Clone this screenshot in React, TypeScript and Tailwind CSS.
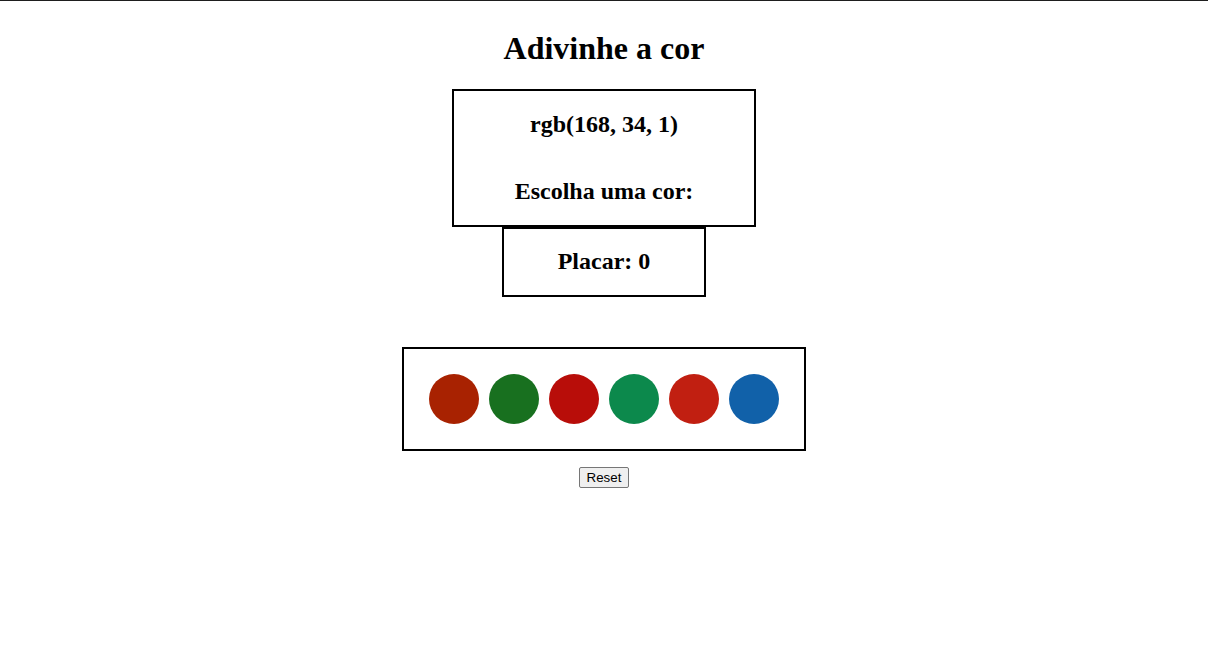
import { useState } from "react";

const initialColors = [
  "rgb(168, 34, 1)",
  "rgb(24, 112, 31)",
  "rgb(184, 13, 9)",
  "rgb(12, 137, 76)",
  "rgb(193, 31, 17)",
  "rgb(17, 97, 169)",
];

export default function App() {
  const [colors] = useState(initialColors);
  const [score, setScore] = useState(0);
  const target = colors[0];

  return (
    <div className="min-h-screen bg-white border-t border-[#1e1e1e] font-['Liberation_Serif',serif] text-black">
      <div className="flex flex-col items-center">
        <h1 className="mt-[29px] text-[32px] leading-[37px] font-bold">
          Adivinhe a cor
        </h1>

        <div className="mt-[22px] w-[304px] border-2 border-black flex flex-col items-center pt-[19px] pb-[20px] gap-[39px]">
          <h2 className="text-[24px] leading-[28px] font-bold">{target}</h2>
          <h2 className="text-[24px] leading-[28px] font-bold">
            Escolha uma cor:
          </h2>
        </div>

        <div className="w-[204px] border-2 border-black flex justify-center pt-[18px] pb-[20px]">
          <h2 className="text-[24px] leading-[28px] font-bold">
            Placar: {score}
          </h2>
        </div>

        <div className="mt-[50px] w-[404px] border-2 border-black flex justify-center gap-[10px] py-[25px]">
          {colors.map((c, i) => (
            <div
              key={i}
              className="w-[50px] h-[50px] rounded-full cursor-pointer"
              style={{ backgroundColor: c }}
              onClick={() => c === target && setScore(score + 1)}
            />
          ))}
        </div>

        <button
          className="mt-[16px] h-[21px] px-[7px] text-[13.33px] leading-[15px] font-['Liberation_Sans',Arial,sans-serif] bg-[#efefef] border border-[#767676] rounded-[2px] text-black"
          onClick={() => setScore(0)}
        >
          Reset
        </button>
      </div>
    </div>
  );
}
